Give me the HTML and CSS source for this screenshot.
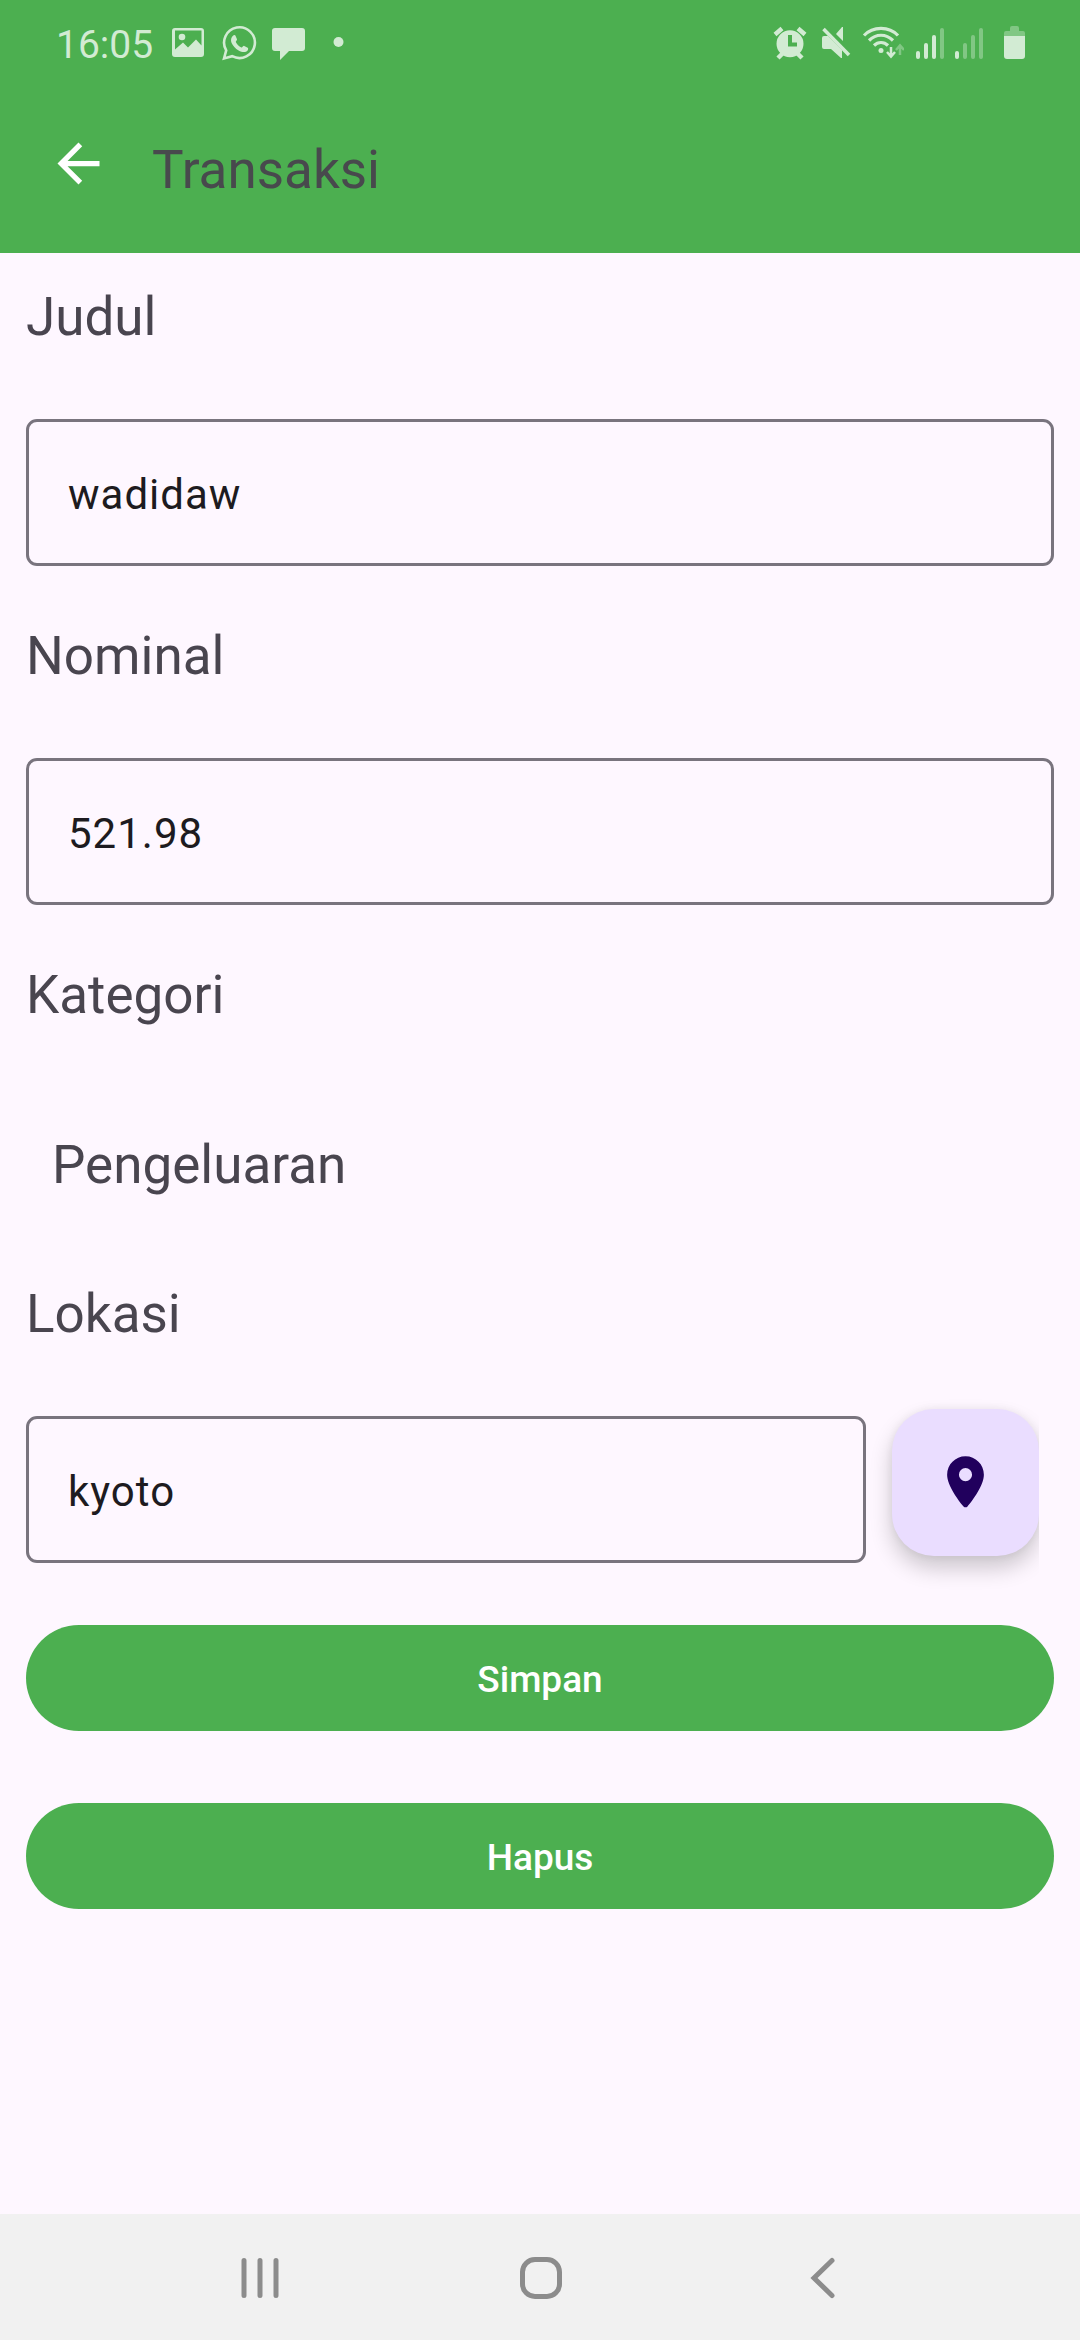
FILE: index.html
```html
<!DOCTYPE html>
<html lang="id">
<head>
<meta charset="utf-8">
<meta name="viewport" content="width=device-width, initial-scale=1">
<title>Transaksi</title>
<link rel="stylesheet" href="styles.css">
</head>
<body>
<div class="screen">
  <header class="top">
    <div class="status">
      <span class="time">16:05</span>
      <div class="status-left">
        <svg width="36" height="36" viewBox="0 0 36 36" fill="currentColor"><path fill-rule="evenodd" d="M4 3h26a3 3 0 0 1 3 3v23a3 3 0 0 1-3 3H4a3 3 0 0 1-3-3V6a3 3 0 0 1 3-3ZM4 5.500v19l8-7 5 5 8-8 5.500 6V5.500Z"/><circle cx="11" cy="12" r="3.3"/></svg>
        <svg width="36" height="36" viewBox="0 0 36 36" fill="none" stroke="currentColor" stroke-width="2.6"><path d="M3 33.5 5.2 25.4A15.4 15.4 0 1 1 11.2 31.2Z"/><path fill="currentColor" stroke="none" d="M12.6 10.2c.7-.5 1.5-.3 1.8.4l1.6 3.6c.3.8-1.5 2.2-1.2 2.8 1.300 2.500 3 4.300 5.600 5.500.8.3 2-2 2.800-1.600l3.500 1.800c.7.4.5 1.900-.1 2.700-2 2.500-5.500 2-9 .1-3.300-1.800-5.700-4.700-7-7.500-1.200-2.800-.6-6 2-7.800Z"/></svg>
        <svg width="36" height="36" viewBox="0 0 36 36" fill="currentColor"><path d="M4 3h27a3 3 0 0 1 3 3v17a3 3 0 0 1-3 3H18l-9 9v-9H4a3 3 0 0 1-3-3V6a3 3 0 0 1 3-3Z"/></svg>
        <svg width="36" height="36" viewBox="0 0 36 36" fill="currentColor"><circle cx="17.500" cy="17" r="5"/></svg>
      </div>
      <div class="status-right">
        <svg width="36" height="36" viewBox="0 0 36 36" fill="none" stroke="currentColor"><path stroke-width="4.500" d="M3 9.500 10 3.500M33 9.500 26 3.500M11 28l-5 5M25 28l5 5"/><path fill="currentColor" stroke="none" fill-rule="evenodd" d="M18 5.200a13.500 13.500 0 1 1 0 27 13.500 13.500 0 0 1 0-27Zm-2 4.800v11.500h9v-4h-5V10Z"/></svg>
        <svg width="36" height="36" viewBox="0 0 36 36" fill="currentColor"><path d="M8 11h4l14 14v8h-1l-10-9H8a2 2 0 0 1-2-2v-9a2 2 0 0 1 2-2ZM26 2h1v14l-7-7Z"/><path fill="none" stroke="currentColor" stroke-width="3.500" d="M7.500 4 33 30"/></svg>
        <svg width="44" height="36" viewBox="0 0 44 36" fill="none" stroke="currentColor" stroke-width="3.200"><path d="M4 10.500c9-9.500 25-9.500 34 0M9 15.500c7-7 17-7 24 0M14 20.500c4-4 10-4 14 0"/><circle cx="21" cy="25.500" r="2.500" fill="currentColor" stroke="none"/><path stroke-width="2.500" d="M31 22v9m-4-4 4 4.500 4-4.500"/><path class="dim" stroke-width="2.500" d="M40 30v-9m-4 4 4-4.500 4 4.500"/></svg>
        <svg width="32" height="36" viewBox="0 0 32 36" fill="currentColor"><rect x="4" y="26" width="4" height="8" rx="2"/><rect x="12" y="18" width="4" height="16" rx="2"/><rect x="20" y="10" width="4" height="24" rx="2"/><rect class="dim" x="28" y="3" width="4" height="31" rx="2"/></svg>
        <svg width="32" height="36" viewBox="0 0 32 36" fill="currentColor"><rect x="3" y="26" width="4" height="8" rx="2"/><rect class="dim" x="11" y="18" width="4" height="16" rx="2"/><rect class="dim" x="19" y="10" width="4" height="24" rx="2"/><rect class="dim" x="27" y="3" width="4" height="31" rx="2"/></svg>
        <svg width="44" height="36" viewBox="0 0 44 36" fill="currentColor"><path class="dim" d="M12 11V8q0-2 2-2h4V3q0-2 2-2h5q2 0 2 2v3h4q2 0 2 2v3Z"/><path d="M12 11h21v20q0 3-3 3H15q-3 0-3-3Z"/></svg>
      </div>
    </div>
    <div class="app-bar">
      <button class="back" type="button" aria-label="Kembali"><svg width="63" height="63" viewBox="0 0 24 24" fill="currentColor"><path d="M20 11H7.830l5.590-5.590L12 4l-8 8 8 8 1.410-1.410L7.830 13H20v-2z"/></svg></button>
      <h1 class="title">Transaksi</h1>
    </div>
  </header>

  <main class="content">
    <form class="form">
      <div class="field">
        <label class="label" for="judul">Judul</label>
        <input class="input" id="judul" type="text" value="wadidaw">
      </div>
      <div class="field">
        <label class="label" for="nominal">Nominal</label>
        <input class="input" id="nominal" type="text" inputmode="decimal" value="521.98">
      </div>
      <div class="field category">
        <label class="label" for="kategori">Kategori</label>
        <select class="select" id="kategori"><option>Pengeluaran</option></select>
      </div>
      <div class="field location">
        <label class="label" for="lokasi">Lokasi</label>
        <div class="location-row">
          <input class="input" id="lokasi" type="text" value="kyoto">
          <div class="fab-clip">
            <button class="fab" type="button" aria-label="Pilih lokasi"><svg width="63" height="63" viewBox="0 0 24 24" fill="currentColor"><path d="M12 2C8.130 2 5 5.130 5 9c0 4.170 4.420 9.920 6.240 12.110.4.480 1.130.480 1.530 0C14.580 18.920 19 13.170 19 9c0-3.870-3.130-7-7-7zm0 9.500a2.500 2.500 0 1 1 0-5 2.500 2.500 0 0 1 0 5z"/></svg></button>
          </div>
        </div>
      </div>
      <div class="actions">
        <button class="action" type="submit">Simpan</button>
        <button class="action" type="button">Hapus</button>
      </div>
    </form>
  </main>

  <nav class="nav">
    <button type="button" aria-label="Aplikasi terbaru"><svg width="48" height="48" viewBox="0 0 48 48" fill="none" stroke="currentColor" stroke-width="5" stroke-linecap="round"><path d="M8 7.500v35M24 7.500v35M40 7.500v35"/></svg></button>
    <button type="button" aria-label="Beranda"><svg width="48" height="48" viewBox="0 0 48 48" fill="none" stroke="currentColor" stroke-width="5"><rect x="6.500" y="6.500" width="37" height="37" rx="12.500"/></svg></button>
    <button type="button" aria-label="Kembali"><svg width="48" height="48" viewBox="0 0 48 48" fill="none" stroke="currentColor" stroke-width="5" stroke-linecap="round"><path d="M36 7.500 18 25 36 42.500"/></svg></button>
  </nav>
</div>
</body>
</html>
```

FILE: styles.css
```css
* {
  box-sizing: border-box;
}

body {
  margin: 0;
  background: #fef7ff;
  color: #49454f;
  font-family: Roboto, "Noto Sans", sans-serif;
}

button,
input,
select {
  margin: 0;
  border: 0;
  padding: 0;
  background: none;
  color: inherit;
  font: inherit;
}

svg {
  display: block;
  flex: none;
}

.screen {
  display: flex;
  flex-direction: column;
  min-height: 100vh;
}

/* Status bar and app bar */
.top {
  background: #4caf50;
}

.status {
  display: flex;
  align-items: center;
  height: 86px;
  padding: 0 44px 0 56px;
  color: #d2ebd3;
}

.time {
  width: 115px;
  padding-top: 4px;
  font-size: 39px;
}

.status-left {
  display: flex;
  gap: 14px;
}

.status-right {
  display: flex;
  gap: 8px;
  margin-left: auto;
}

.dim {
  opacity: 0.4;
}

.app-bar {
  display: flex;
  align-items: center;
  gap: 42px;
  height: 167px;
  padding: 0 47px;
}

.back {
  padding-bottom: 12px;
  color: #fff;
}

.title {
  margin: 0;
  color: #48494d;
  font-size: 53px;
  font-weight: 400;
  line-height: 62px;
}

/* Form */
.content {
  flex: 1;
  padding: 33px 26px;
}

.form,
.field,
.actions {
  display: flex;
  flex-direction: column;
}

.form {
  gap: 59px;
}

.field {
  gap: 71px;
}

.label {
  font-size: 53px;
  line-height: 62px;
}

.input {
  width: 100%;
  height: 147px;
  padding: 4px 39px 0;
  border: 3px solid #79747e;
  border-radius: 11px;
  color: #1d1b20;
  font-size: 42px;
  letter-spacing: 1px;
}

.category {
  gap: 108px;
}

.select {
  appearance: none;
  height: 62px;
  padding: 0 26px;
  font-size: 53px;
  line-height: 62px;
}

.location {
  gap: 64px;
  margin-top: 28px;
}

.location-row {
  display: flex;
  align-items: flex-end;
  gap: 26px;
  padding-right: 15px;
}

/* The shadow is cut off at the right edge of the row */
.fab-clip {
  flex: none;
  padding-bottom: 7px;
  clip-path: inset(-40px 0 -40px -40px);
}

.fab {
  display: flex;
  align-items: center;
  justify-content: center;
  width: 147px;
  height: 147px;
  border-radius: 42px;
  background: #eaddff;
  color: #21005d;
  box-shadow: 0 12px 22px rgba(0, 0, 0, 0.2), 0 0 8px rgba(0, 0, 0, 0.06);
}

.actions {
  gap: 72px;
  padding-top: 3px;
}

.action {
  height: 106px;
  padding-top: 2px;
  border-radius: 53px;
  background: #4caf50;
  color: #fff;
  font-size: 37px;
  font-weight: 500;
}

/* System navigation */
.nav {
  display: grid;
  grid-template-columns: repeat(3, 1fr);
  height: 126px;
  padding: 0 120px;
  background: #f1f1f1;
  color: #8c8c8c;
}

.nav button {
  display: flex;
  align-items: center;
  justify-content: center;
}
```
